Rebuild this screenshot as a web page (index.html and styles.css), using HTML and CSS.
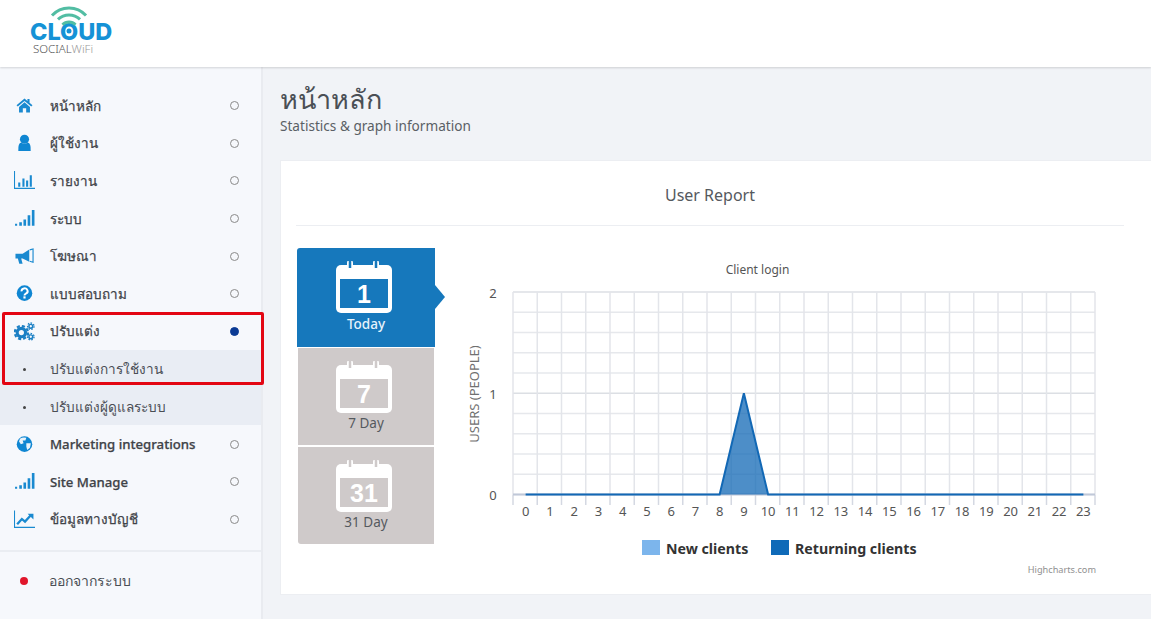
FILE: index.html
```html
<!DOCTYPE html>
<html lang="en">
<head>
    <meta charset="UTF-8">
    <meta name="viewport" content="width=device-width, initial-scale=1.0">
    <title>Cloud Social WiFi</title>
    <link rel="stylesheet" href="styles.css">
</head>
<body>
    <header class="topbar">
        <div class="logo">
            <div class="logo-name">CLOUD</div>
            <div class="logo-sub">SOCIAL<span class="logo-sub-thin">WiFi</span></div>
            <svg class="logo-wifi" viewBox="0 0 44 36" width="44" height="36">
                <path d="M5 10.500 A23 23 0 0 1 39 10.500" fill="none" stroke="#52bda3" stroke-width="3"/>
                <path d="M11 14.400 A16 16 0 0 1 33 14.400" fill="none" stroke="#52bda3" stroke-width="3"/>
                <path d="M15.500 19.800 A9 9 0 0 1 28.500 19.800" fill="none" stroke="#52bda3" stroke-width="3"/>
                <circle cx="22" cy="26" r="2.500" fill="#1592d6"/>
            </svg>
        </div>
    </header>

    <div class="layout">
        <aside class="sidebar">
            <ul class="menu">
                <li class="menu-item">
                    <svg class="menu-icon" viewBox="-2.500 -2 25 22.600"><path d="M10 1 L0.500 9 L2 10.500 L10 3.800 L18 10.500 L19.500 9 L16 6 V1.500 H13.500 V3.900 Z M10 5.500 L3.500 11 V17.500 H8 V12.500 H12 V17.500 H16.500 V11 Z" fill="#1a8ad0"/></svg>
                    <span class="menu-text">หน้าหลัก</span><span class="radio"></span>
                </li>
                <li class="menu-item">
                    <svg class="menu-icon" viewBox="-1 -0.500 22 20"><circle cx="10" cy="5" r="4.800" fill="#0f86d2"/><path d="M3.500 17.500 Q3 9 6.500 8.500 Q10 11 13.500 8.500 Q17 9 16.500 17.500 Z" fill="#0f86d2"/></svg>
                    <span class="menu-text">ผู้ใช้งาน</span><span class="radio"></span>
                </li>
                <li class="menu-item">
                    <svg class="menu-icon" viewBox="0 0 20 18"><path d="M0.500 0 V16.500 H20" fill="none" stroke="#1a8ad0"/><path d="M4 11h2v4h-2z M8 7h2v8h-2z M11.500 9h2v6h-2z M15 4h2v11h-2z" fill="#1a8ad0"/></svg>
                    <span class="menu-text">รายงาน</span><span class="radio"></span>
                </li>
                <li class="menu-item">
                    <svg class="menu-icon" viewBox="0 0 20 18"><path d="M1 14h2v2h-2z M5 12.500h2.500v3.500h-2.500z M9 10h2.500v6h-2.500z M13 6h2.500v10h-2.500z M17 1h2.500v15h-2.500z" fill="#1a8ad0"/></svg>
                    <span class="menu-text">ระบบ</span><span class="radio"></span>
                </li>
                <li class="menu-item">
                    <svg class="menu-icon" viewBox="-1 -1 22 20"><path d="M0.500 6 H8 L15 1.500 V14.500 L8 11 H6.500 L8 16.500 H4.500 L3 11 H0.500 Z" fill="#1a8ad0"/><path d="M15.500 2 L19 1 V15 L15.500 14" fill="none" stroke="#1a8ad0" stroke-width="1.200"/></svg>
                    <span class="menu-text">โฆษณา</span><span class="radio"></span>
                </li>
                <li class="menu-item">
                    <svg class="menu-icon" viewBox="-1.500 -1 23 20.800"><circle cx="10" cy="9" r="8.500" fill="#0f86d2"/><path d="M6.800 7 A3.300 3 0 1 1 11.500 9.500 Q10 10.200 10 11.500" fill="none" stroke="#fff" stroke-width="2.200"/><rect x="8.800" y="12.500" width="2.400" height="2.400" fill="#fff"/></svg>
                    <span class="menu-text">แบบสอบถาม</span><span class="radio"></span>
                </li>
                <li class="menu-item">
                    <svg class="menu-icon" viewBox="0 0 20 18"><circle cx="7" cy="10" r="4" fill="none" stroke="#1a7fc4" stroke-width="3"/><circle cx="7" cy="10" r="6.300" fill="none" stroke="#1a7fc4" stroke-width="2" stroke-dasharray="3 2"/><circle cx="16" cy="4" r="1.800" fill="none" stroke="#1a7fc4" stroke-width="1.400"/><circle cx="16" cy="4" r="3.100" fill="none" stroke="#1a7fc4" stroke-width="1.200" stroke-dasharray="1.500 1.300"/><circle cx="16" cy="14" r="1.800" fill="none" stroke="#1a7fc4" stroke-width="1.400"/><circle cx="16" cy="14" r="3.100" fill="none" stroke="#1a7fc4" stroke-width="1.200" stroke-dasharray="1.500 1.300"/></svg>
                    <span class="menu-text">ปรับแต่ง</span><span class="radio radio-on"></span>
                </li>
                <li class="menu-item sub-item"><span class="bullet"></span><span class="sub-text">ปรับแต่งการใช้งาน</span></li>
                <li class="menu-item sub-item"><span class="bullet"></span><span class="sub-text">ปรับแต่งผู้ดูแลระบบ</span></li>
                <li class="menu-item">
                    <svg class="menu-icon" viewBox="-1.500 -1 23 20.800"><circle cx="10" cy="9" r="8.500" fill="#0f86d2"/><path d="M5 3 Q8 1 12 2 L11 5 L8 5 L9 8 L6 9 L4 6 Z M12 8 L17 8 L16 13 L13 15.500 L12 12 Z" fill="#e8f3fb"/></svg>
                    <span class="menu-text menu-text-en">Marketing integrations</span><span class="radio"></span>
                </li>
                <li class="menu-item">
                    <svg class="menu-icon" viewBox="0 0 20 18"><path d="M1 14h2v2h-2z M5 12.500h2.500v3.500h-2.500z M9 10h2.500v6h-2.500z M13 6h2.500v10h-2.500z M17 1h2.500v15h-2.500z" fill="#1a8ad0"/></svg>
                    <span class="menu-text menu-text-en">Site Manage</span><span class="radio"></span>
                </li>
                <li class="menu-item">
                    <svg class="menu-icon" viewBox="0 0 20 18"><path d="M0.500 0.500 V16.500 H20" fill="none" stroke="#1a8ad0"/><path d="M3 13.500 L7.500 8.500 L10.500 11 L16 5" fill="none" stroke="#1a8ad0" stroke-width="2.200"/><path d="M13 3.500 H18.500 V9 Z" fill="#1a8ad0"/></svg>
                    <span class="menu-text">ข้อมูลทางบัญชี</span><span class="radio"></span>
                </li>
            </ul>
            <div class="logout"><span class="logout-dot"></span><span class="sub-text">ออกจากระบบ</span></div>
            <div class="highlight-box"></div>
        </aside>

        <main class="content">
            <h1 class="page-title">หน้าหลัก</h1>
            <p class="page-subtitle">Statistics &amp; graph information</p>

            <section class="card">
                <h2 class="card-title">User Report</h2>
                <div class="card-body">
                    <div class="range-tabs">
                        <div class="range-tab range-tab-active">
                            <svg class="calendar" viewBox="0 0 56 52">
                                <rect width="56" height="48" y="4" rx="5" fill="#fff"/>
                                <rect x="4" y="18" width="48" height="29" fill="#1678bc"/>
                                <path d="M14 2 V9 M40 2 V9" stroke="#fff" stroke-width="6" stroke-linecap="round"/>
                                <path d="M14 0 V7 M40 0 V7" stroke="#1678bc" stroke-width="2.500"/>
                                <text x="28" y="42" class="calendar-num">1</text>
                            </svg>
                            <span class="range-label">Today</span>
                        </div>
                        <div class="range-tab range-tab-middle">
                            <svg class="calendar" viewBox="0 0 56 52">
                                <rect width="56" height="48" y="4" rx="5" fill="#fff"/>
                                <rect x="4" y="18" width="48" height="29" fill="#cfcaca"/>
                                <path d="M14 2 V9 M40 2 V9" stroke="#fff" stroke-width="6" stroke-linecap="round"/>
                                <path d="M14 0 V7 M40 0 V7" stroke="#cfcaca" stroke-width="2.500"/>
                                <text x="28" y="42" class="calendar-num">7</text>
                            </svg>
                            <span class="range-label">7 Day</span>
                        </div>
                        <div class="range-tab">
                            <svg class="calendar" viewBox="0 0 56 52">
                                <rect width="56" height="48" y="4" rx="5" fill="#fff"/>
                                <rect x="4" y="18" width="48" height="29" fill="#cfcaca"/>
                                <path d="M14 2 V9 M40 2 V9" stroke="#fff" stroke-width="6" stroke-linecap="round"/>
                                <path d="M14 0 V7 M40 0 V7" stroke="#cfcaca" stroke-width="2.500"/>
                                <text x="28" y="42" class="calendar-num">31</text>
                            </svg>
                            <span class="range-label">31 Day</span>
                        </div>
                    </div>
                    <svg class="chart" id="chart" viewBox="445 248 680 342" width="680" height="342"></svg>
                </div>
            </section>
        </main>
    </div>

    <script src="chart.js"></script>
</body>
</html>
```

FILE: styles.css
```css
/* Base Styles */
* {
    margin: 0;
    padding: 0;
    box-sizing: border-box;
}

html, body {
    height: 100%;
    overflow: hidden;
}

body {
    font-family: "Noto Sans", "Open Sans", sans-serif;
    background-color: #f1f3f7;
    color: #444;
    display: flex;
    flex-direction: column;
}

/* Top bar */
.topbar {
    height: 67px;
    flex-shrink: 0;
    background-color: #fff;
    box-shadow: 0 1px 2px rgba(0, 0, 0, 0.15);
    padding: 23px 0 0 30px;
    position: relative;
    z-index: 2;
}

.logo {
    position: relative;
    width: 84px;
}

.logo-wifi {
    position: absolute;
    left: 17px;
    top: -18px;
}

.logo-name {
    font-family: Inter, sans-serif;
    font-weight: 800;
    font-size: 23.5px;
    line-height: 18px;
    color: #1592d6;
}

.logo-sub {
    font-size: 11.5px;
    font-weight: 300;
    line-height: 12px;
    margin-top: 2px;
    margin-left: 3px;
    color: #555;
    white-space: nowrap;
}

.logo-sub-thin {
    color: #999;
}

.layout {
    flex: 1;
    display: flex;
    min-height: 0;
}

/* Sidebar */
.sidebar {
    width: 263px;
    flex-shrink: 0;
    background-color: #f6f8fc;
    border-right: 2px solid #e9ebf0;
    padding-top: 20px;
    position: relative;
}

.menu {
    list-style: none;
    border-bottom: 2px solid #eaedf2;
    padding-bottom: 12px;
}

.menu-item {
    height: 37.6px;
    display: flex;
    align-items: center;
    padding-left: 14px;
}

.menu-icon {
    width: 21px;
    height: 19px;
    flex-shrink: 0;
}

.menu-text {
    margin-left: 15px;
    flex: 1;
    font-size: 13.5px;
    font-weight: 500;
    -webkit-text-stroke: 0.25px #3f4348;
    color: #3f4348;
}

.menu-text-en {
    font-size: 13.2px;
}

.radio {
    width: 9px;
    height: 9px;
    border: 1px solid #8a8a8a;
    border-radius: 50%;
    margin-right: 22px;
}

.radio-on {
    background-color: #0a3a94;
    border-color: #0a3a94;
}

.sub-item {
    background-color: #e9edf4;
    padding: 1px 0 0 23px;
}

.bullet {
    width: 3px;
    height: 3px;
    border-radius: 50%;
    background-color: #444;
    flex-shrink: 0;
}

.sub-text {
    margin-left: 24px;
    font-size: 13.6px;
    color: #4a4e54;
}

.logout {
    display: flex;
    align-items: center;
    height: 30px;
    margin-top: 14px;
    padding-left: 20px;
}

.logout-dot {
    width: 8px;
    height: 8px;
    border-radius: 50%;
    background-color: #e0162b;
    flex-shrink: 0;
}

.logout .sub-text {
    margin-left: 21px;
    font-size: 14px;
}

/* Annotation drawn over the menu */
.highlight-box {
    position: absolute;
    left: 2px;
    top: 245px;
    width: 262px;
    height: 73px;
    border: 3px solid #e30613;
    border-radius: 2px;
}

/* Main content */
.content {
    flex: 1;
    min-width: 0;
    padding: 14px 0 0 17px;
}

.page-title {
    font-size: 27px;
    font-weight: 300;
    line-height: 36px;
    color: #4a4f55;
}

.page-subtitle {
    font-size: 13.6px;
    line-height: 18px;
    color: #5a5f65;
}

.card {
    margin: 25px 0 0 0;
    height: 435px;
    background-color: #fff;
    border: 1px solid #eceef2;
    border-right: none;
    padding: 0 27px 0 15px;
}

.card-title {
    height: 65px;
    line-height: 68px;
    border-bottom: 1px solid #eceef2;
    text-align: center;
    font-size: 16px;
    font-weight: 400;
    color: #55595e;
}

.card-body {
    display: flex;
    margin-top: 22px;
}

/* Range tabs */
.range-tabs {
    width: 138px;
    flex-shrink: 0;
    display: flex;
    flex-direction: column;
    gap: 1px;
    margin-left: 1px;
}

.range-tab {
    height: 97px;
    margin: 0 1px;
    background-color: #cfcaca;
    display: flex;
    flex-direction: column;
    align-items: center;
    padding-top: 13px;
    position: relative;
}

.range-tab-middle {
    height: 98px;
    border-bottom: 1px solid #fff;
}

.range-tab:last-child {
    border-radius: 0 0 0 3px;
}

.range-tab-active {
    height: 99px;
    margin: 0;
    background-color: #1678bc;
    border-radius: 3px 0 0 0;
}

.range-tab-active::after {
    content: "";
    position: absolute;
    left: 100%;
    top: 37px;
    border-left: 10px solid #1678bc;
    border-top: 12px solid transparent;
    border-bottom: 12px solid transparent;
}

.calendar {
    width: 56px;
    height: 52px;
    margin-right: 4px;
}

.calendar-num {
    font-family: "Liberation Sans", sans-serif;
    font-weight: 700;
    font-size: 25px;
    fill: #fff;
    text-anchor: middle;
}

.range-label {
    font-size: 13.5px;
    line-height: 18px;
    margin-top: 1px;
    color: #55595e;
}

.range-tab-active .range-label {
    margin-top: 2px;
    color: #e6f3fb;
    font-weight: 500;
}

/* Chart */
.chart {
    flex-shrink: 0;
    margin-left: 10px;
}

.chart text {
    font-family: "Noto Sans", sans-serif;
}

.chart-title {
    font-size: 12px;
    fill: #555;
    text-anchor: middle;
}

.axis-label {
    font-size: 13px;
    fill: #555;
    text-anchor: middle;
}

.axis-title {
    font-size: 13px;
    fill: #707070;
    text-anchor: middle;
}

.legend-label {
    font-size: 14.2px;
    font-weight: 700;
    fill: #333;
}

.credits {
    font-size: 9.2px;
    fill: #909090;
    text-anchor: end;
}
```

FILE: chart.js
```js
// Client login chart, drawn the way the report page draws it
const svg = document.getElementById('chart');
const NS = 'http://www.w3.org/2000/svg';

const left = 513;
const right = 1095;
const top_ = 292;
const bottom = 494.5;
const data = [0, 0, 0, 0, 0, 0, 0, 0, 0, 1, 0, 0, 0, 0, 0, 0, 0, 0, 0, 0, 0, 0, 0, 0];
const labels = ['0', '1', '2', '3', '4', '5', '6', '7', '8', '9', '10', '11', '12', '13', '14', '15', '16', '17', '18', '19', '20', '21', '22', '23'];
const step = (right - left) / labels.length;

function add(tag, attrs, text) {
    const el = document.createElementNS(NS, tag);
    for (const key in attrs) {
        el.setAttribute(key, attrs[key]);
    }
    if (text) {
        el.textContent = text;
    }
    svg.appendChild(el);
    return el;
}

function line(x1, y1, x2, y2, color, width) {
    add('line', { x1: x1, y1: y1, x2: x2, y2: y2, stroke: color, 'stroke-width': width || 1.5 });
}

const xAt = i => left + step * (i + 0.5) + 0.5;
const yAt = v => bottom - (bottom - top_) * v / 2;

// horizontal grid, every 0.2
for (let i = 0; i <= 10; i++) {
    const y = top_ + (bottom - top_) * i / 10;
    line(left, y, right, y, i === 0 || i === 5 ? '#dcdfe4' : '#e6e8ec');
}

// vertical grid and ticks
for (let i = 0; i <= labels.length; i++) {
    const x = left + step * i;
    line(x, top_, x, bottom, '#e3e5ea');
    line(x, bottom, x, 505, '#d4d8e2');
}
line(left, 494.5, right, 494.5, '#c0c8d8', 2);

// series
const points = data.map((v, i) => xAt(i) + ',' + yAt(v)).join(' ');
add('polygon', { points: xAt(0) + ',' + bottom + ' ' + points + ' ' + xAt(23) + ',' + bottom, fill: '#1268b5', 'fill-opacity': 0.75 });
add('polyline', { points: points, fill: 'none', stroke: '#1268b5', 'stroke-width': 2 });

// labels
labels.forEach((label, i) => {
    add('text', { x: xAt(i), y: 516, class: 'axis-label' }, label);
});
add('text', { x: 493, y: 298, class: 'axis-label' }, '2');
add('text', { x: 493, y: 399, class: 'axis-label' }, '1');
add('text', { x: 493, y: 500, class: 'axis-label' }, '0');
add('text', { x: 757.5, y: 274, class: 'chart-title' }, 'Client login');
add('text', { x: 479, y: 394, class: 'axis-title', transform: 'rotate(-90 479 394)' }, 'USERS (PEOPLE)');

// legend
add('rect', { x: 642, y: 540, width: 18, height: 15, fill: '#7cb5ec' });
add('text', { x: 666, y: 554, class: 'legend-label' }, 'New clients');
add('rect', { x: 771, y: 540, width: 18, height: 15, fill: '#0f6ab8' });
add('text', { x: 795, y: 554, class: 'legend-label' }, 'Returning clients');
add('text', { x: 1096, y: 573, class: 'credits' }, 'Highcharts.com');
```
